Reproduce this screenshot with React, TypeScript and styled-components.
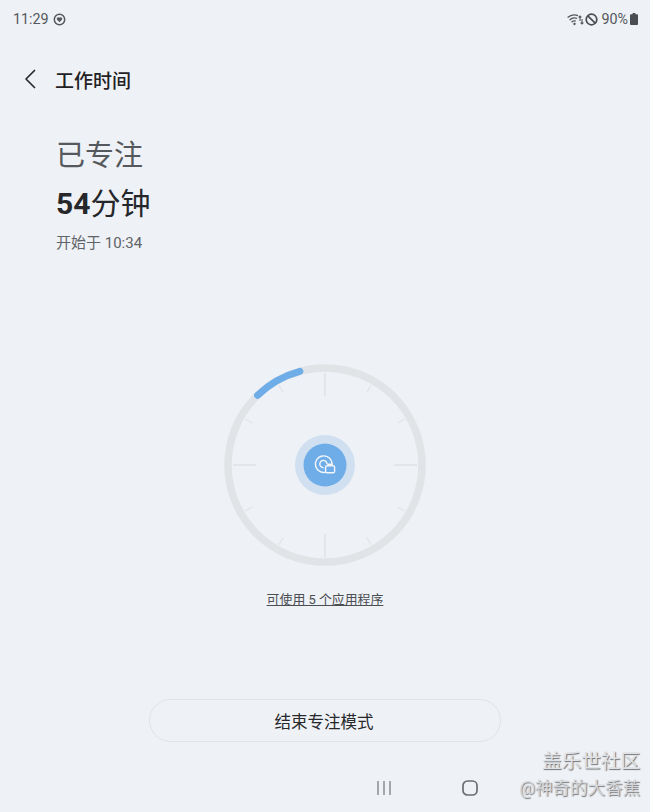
import React from 'react';
import styled, { createGlobalStyle } from 'styled-components';

const CJK = '"Roboto", "Noto Sans CJK SC", sans-serif';

const GlobalStyle = createGlobalStyle`
    html, body {
        margin: 0;
        padding: 0;
        background: #eef1f5;
    }
`;

const Page = styled.div`
    position: relative;
    display: flex;
    flex-direction: column;
    width: 650px;
    height: 812px;
    overflow: hidden;
    background: #eef1f5;
    font-family: ${CJK};
    color: #222427;
`;

const StatusBar = styled.div`
    display: flex;
    align-items: center;
    justify-content: space-between;
    height: 38px;
    padding: 0 12px 0 13px;
    font-size: 14.3px;
    color: #55585c;
`;

const StatusGroup = styled.div<{ $gap: number }>`
    display: flex;
    align-items: center;
    gap: ${({ $gap }) => $gap}px;
`;

const Battery = styled.span`
    margin: 0 1px 0 2px;
`;

const Header = styled.div`
    display: flex;
    align-items: center;
    gap: 19px;
    height: 40px;
    margin-top: 21px;
    padding-left: 24px;
`;

const Title = styled.h1`
    margin: 0;
    font-size: 19px;
    font-weight: 500;
    color: #1f2124;
`;

const Summary = styled.div`
    display: flex;
    flex-direction: column;
    margin-top: 37px;
    padding-left: 56px;
`;

const Label = styled.div`
    font-size: 29px;
    line-height: 40px;
    color: #55585c;
`;

const Elapsed = styled.div`
    margin-top: 8px;
    font-size: 30px;
    line-height: 40px;
    color: #25272a;

    b {
        font-weight: 700;
    }
`;

const Started = styled.div`
    margin-top: 9px;
    font-size: 15px;
    line-height: 20px;
    color: #606367;
`;

const DialArea = styled.div`
    display: flex;
    justify-content: center;
    margin-top: 102px;
`;

const AppsLink = styled.a`
    align-self: center;
    margin-top: 16px;
    font-size: 12.9px;
    line-height: 18px;
    color: #4b4e52;
    text-decoration: underline;
`;

const EndButton = styled.button`
    align-self: center;
    width: 352px;
    height: 43px;
    margin-top: 90px;
    padding: 0 2px 0 0;
    border: 1px solid #dfe2e6;
    border-radius: 22px;
    background: transparent;
    font-family: inherit;
    font-size: 16.5px;
    font-weight: 400;
    color: #26282b;
`;

const NavBar = styled.div`
    display: flex;
    align-items: center;
    gap: 70px;
    height: 36px;
    margin-top: 28px;
    padding-left: 376px;
`;

const Watermark = styled.div`
    position: absolute;
    right: 10px;
    bottom: 11px;
    display: flex;
    flex-direction: column;
    align-items: flex-end;
`;

const WatermarkTitle = styled.div`
    font-size: 19.6px;
    line-height: 26px;
    color: #dfe1e4;
    text-shadow: 1px 1px 1px #6f7276;
`;

const WatermarkUser = styled.div`
    font-size: 17.5px;
    line-height: 26px;
    color: #d6d8db;
    text-shadow: 1px 1px 1px #777a7e;
`;

const polar = (r: number, deg: number) => {
    const a = (deg * Math.PI) / 180;
    return [110 + r * Math.sin(a), 110 - r * Math.cos(a)];
};

const Dial: React.FC = () => {
    const ticks = Array.from({ length: 12 }, (_, i) => i * 30);
    const [sx, sy] = polar(97, -44);
    const [ex, ey] = polar(97, -15);
    return (
        <svg width="220" height="220" viewBox="0 0 220 220">
            <circle cx="110" cy="110" r="97" fill="none" stroke="#e0e4e6" strokeWidth="7.5" />
            {ticks.map(deg => {
                const major = deg % 90 === 0;
                const [x1, y1] = polar(major ? 69 : 84, deg);
                const [x2, y2] = polar(92, deg);
                return (
                    <line
                        key={deg}
                        x1={x1}
                        y1={y1}
                        x2={x2}
                        y2={y2}
                        stroke={major ? '#dde1e4' : '#e2e5e8'}
                        strokeWidth="1.4"
                    />
                );
            })}
            <path
                d={`M${sx} ${sy} A97 97 0 0 1 ${ex} ${ey}`}
                fill="none"
                stroke="#6fade9"
                strokeWidth="7"
                strokeLinecap="round"
            />
            <circle cx="110" cy="110" r="30" fill="#d0e0f1" />
            <circle cx="110" cy="110" r="21.5" fill="#6fade9" />
            <g fill="none" stroke="#f2f6fb" strokeWidth="1.4">
                <path d="M112 116.8 A8.3 8.3 0 1 1 117 109" />
                <path d="M108.8 112.6 A3.6 3.6 0 1 1 112 109.2" />
                <rect x="110.6" y="110.8" width="9" height="7" rx="1.6" fill="#6fade9" />
                <path d="M113 110.6 V109.2 H117.2 V110.6" />
            </g>
        </svg>
    );
};

export default function App() {
    return (
        <Page>
            <GlobalStyle />
            <StatusBar>
                <StatusGroup $gap={4}>
                    <span>11:29</span>
                    <svg width="13" height="13" viewBox="0 0 13 13">
                        <circle cx="6.5" cy="6.5" r="5.2" fill="none" stroke="#55585c" strokeWidth="1.5" />
                        <path d="M6.5 9.2 L3.9 6.6 A1.6 1.6 0 0 1 6.5 4.8 A1.6 1.6 0 0 1 9.1 6.6 Z" fill="#55585c" />
                    </svg>
                </StatusGroup>
                <StatusGroup $gap={1}>
                    <svg width="17" height="13" viewBox="0 0 17 13" fill="none" stroke="#55585c" strokeWidth="1.3">
                        <path d="M0.6 4.6 A10 10 0 0 1 11 2.6" />
                        <path d="M2.6 7 A7 7 0 0 1 10 5.4" />
                        <path d="M4.6 9.2 A4 4 0 0 1 8.8 8.2" />
                        <path d="M6.6 11.6 L8.4 10.2" strokeWidth="2" />
                        <path d="M13 3 V8 M11.6 4.4 L13 3 L14.4 4.4 M15 11 V6 M13.6 9.6 L15 11 L16.4 9.6" strokeWidth="1.1" />
                    </svg>
                    <svg width="13" height="13" viewBox="0 0 13 13" fill="none" stroke="#4a4d51" strokeWidth="1.7">
                        <circle cx="6.5" cy="6.5" r="5.3" />
                        <path d="M2.8 2.8 L10.2 10.2" />
                    </svg>
                    <Battery>90%</Battery>
                    <svg width="8" height="12" viewBox="0 0 8 12">
                        <path d="M2.6 0 H5.4 V1.2 H7 A1 1 0 0 1 8 2.2 V11 A1 1 0 0 1 7 12 H1 A1 1 0 0 1 0 11 V2.2 A1 1 0 0 1 1 1.2 H2.6 Z" fill="#4a4d51" />
                    </svg>
                </StatusGroup>
            </StatusBar>
            <Header>
                <svg width="12" height="20" viewBox="0 0 12 20" fill="none" stroke="#2a2c2f" strokeWidth="1.7" strokeLinecap="round" strokeLinejoin="round">
                    <path d="M10.5 1.5 L2 10 L10.5 18.5" />
                </svg>
                <Title>工作时间</Title>
            </Header>
            <Summary>
                <Label>已专注</Label>
                <Elapsed>
                    <b>54</b>分钟
                </Elapsed>
                <Started>开始于 10:34</Started>
            </Summary>
            <DialArea>
                <Dial />
            </DialArea>
            <AppsLink>可使用 5 个应用程序</AppsLink>
            <EndButton>结束专注模式</EndButton>
            <NavBar>
                <svg width="16" height="14" viewBox="0 0 16 14" stroke="#8b8e92" strokeWidth="1.5">
                    <path d="M2 0 V14 M8 0 V14 M14 0 V14" />
                </svg>
                <svg width="16" height="16" viewBox="0 0 16 16" fill="none" stroke="#6a6d71" strokeWidth="1.7">
                    <rect x="1" y="1" width="14" height="14" rx="4.5" />
                </svg>
            </NavBar>
            <Watermark>
                <WatermarkTitle>盖乐世社区</WatermarkTitle>
                <WatermarkUser>@神奇的大香蕉</WatermarkUser>
            </Watermark>
        </Page>
    );
}
